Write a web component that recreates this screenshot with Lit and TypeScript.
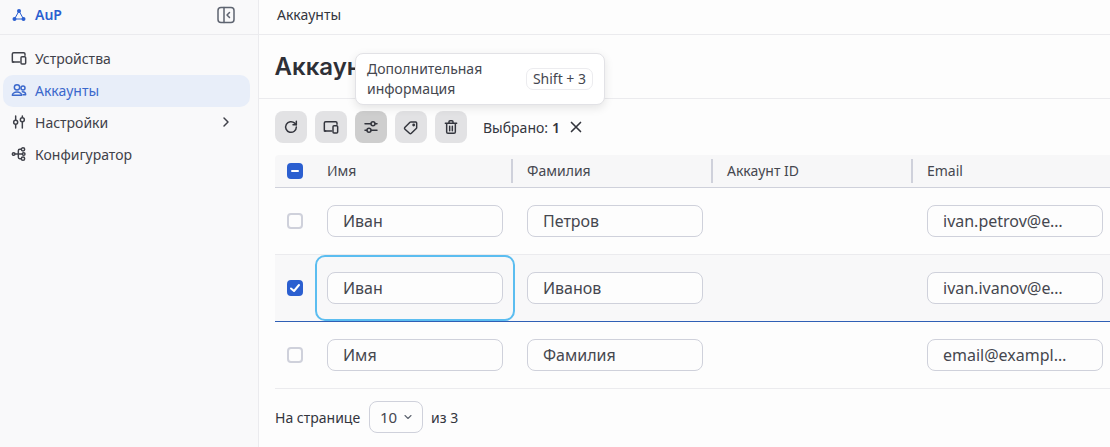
import { LitElement, html, css, svg } from 'lit';
import { customElement } from 'lit/decorators.js';

const icon = (body: unknown, size = 16) => html`<svg
  width=${size}
  height=${size}
  viewBox="0 0 24 24"
  fill="none"
  stroke="currentColor"
  stroke-width="2.2"
  stroke-linecap="round"
  stroke-linejoin="round"
>${body}</svg>`;

const devices = svg`<path d="M4 18a2 2 0 0 1-2-2V6a2 2 0 0 1 2-2h15a2 2 0 0 1 2 2v2"/><path d="M2 18h11"/><rect x="15" y="10" width="7" height="11" rx="1.5"/>`;
const users = svg`<circle cx="9" cy="8" r="4"/><circle cx="18" cy="9" r="3"/><path d="M2 20a7 5 0 0 1 14 0z"/><path d="M17 14.5c3 0 5 1.800 5 4.500h-4"/>`;
const tune = svg`<path d="M7 3v6M7 16v5M17 3v2M17 12v9"/><circle cx="7" cy="12.500" r="3"/><circle cx="17" cy="8.500" r="3"/>`;
const flow = svg`<circle cx="4" cy="12" r="2"/><circle cx="18" cy="5" r="2.500"/><circle cx="19" cy="12" r="2"/><circle cx="18" cy="19" r="2.500"/><path d="M6 12h11M11 12V7a2 2 0 0 1 2-2h2.500M11 12v5a2 2 0 0 0 2 2h2.500"/>`;
const refresh = svg`<path d="M20 12a8 8 0 1 1-2.500-5.800L20 8.500"/><path d="M20 3.500v5h-5"/>`;
const sliders = svg`<path d="M3 7h9M18 7h3M3 17h3M12 17h9"/><circle cx="15" cy="7" r="3"/><circle cx="9" cy="17" r="3"/>`;
const tag = svg`<path d="M3 12.500 10.500 5a2 2 0 0 1 1.400-.6H19a1.500 1.500 0 0 1 1.500 1.500V13a2 2 0 0 1-.6 1.400L12.500 21.500a2 2 0 0 1-2.800 0L3 15.300a2 2 0 0 1 0-2.800z"/><circle cx="16" cy="9" r="1"/>`;
const trash = svg`<path d="M3.500 6.500h17M9 6V4a1.500 1.500 0 0 1 1.500-1.500h3A1.500 1.500 0 0 1 15 4v2"/><path d="M5.500 7v12.500a2 2 0 0 0 2 2h9a2 2 0 0 0 2-2V7"/><path d="M10 11v6.500M14 11v6.500"/>`;

const rows = [
  { first: 'Иван', last: 'Петров', email: 'ivan.petrov@example.com' },
  { first: 'Иван', last: 'Иванов', email: 'ivan.ivanov@example.com', selected: true },
  { first: 'Имя', last: 'Фамилия', email: 'email@example.com' },
];

@customElement('app-root')
export class AppRoot extends LitElement {
  static styles = css`
    :host {
      display: flex;
      width: 1110px;
      height: 447px;
      overflow: hidden;
      background: #fdfdfd;
      color: #33353d;
      font-family: 'Noto Sans', sans-serif;
      font-size: 14px;
    }
    .sidebar {
      flex: none;
      width: 259px;
      box-sizing: border-box;
      background: #f9f9fa;
      border-right: 1px solid #ebebee;
    }
    .brand {
      display: flex;
      align-items: center;
      height: 35px;
      box-sizing: border-box;
      padding: 0 23px 5px 12px;
      border-bottom: 1px solid #ebebee;
      color: #2b5fd0;
      font-weight: 600;
      gap: 9px;
    }
    .brand .collapse {
      margin-left: auto;
      color: #5e6470;
      display: flex;
    }
    .nav {
      padding: 8px 8px 0 3px;
      display: flex;
      flex-direction: column;
    }
    .item {
      display: flex;
      align-items: center;
      height: 32px;
      box-sizing: border-box;
      padding: 0 16px 2px 8px;
      border-radius: 10px;
      gap: 8px;
      color: #3f4149;
    }
    .item.active {
      background: #e8eef9;
      color: #3b68cc;
    }
    .item .more {
      margin-left: auto;
      display: flex;
    }
    .main {
      flex: 1;
      min-width: 0;
      position: relative;
    }
    .crumb {
      height: 35px;
      box-sizing: border-box;
      padding: 0 18px 5px;
      display: flex;
      align-items: center;
      border-bottom: 1px solid #ebebee;
      font-size: 14px;
    }
    .title {
      height: 64px;
      box-sizing: border-box;
      padding: 0 15.5px;
      display: flex;
      align-items: center;
      border-bottom: 1px solid #ebebee;
      font-family: Inter, sans-serif;
      font-size: 24px;
      font-weight: 600;
      color: #2e3037;
    }
    .tip {
      position: absolute;
      left: 96px;
      top: 53px;
      width: 250px;
      height: 52px;
      box-sizing: border-box;
      padding: 0 11px;
      display: flex;
      align-items: center;
      justify-content: space-between;
      background: #fff;
      border: 1px solid #e2e2e6;
      border-radius: 8px;
      box-shadow: 0 3px 10px rgba(0, 0, 0, 0.1);
      font-size: 14px;
      line-height: 20px;
      color: #45474f;
    }
    .tip .text {
      width: 140px;
    }
    .kbd {
      border: 1px solid #ececef;
      border-radius: 7px;
      padding: 0 6px;
      height: 20px;
    }
    .toolbar {
      display: flex;
      align-items: center;
      gap: 8px;
      padding: 12px 16px;
    }
    .tool {
      width: 32px;
      height: 32px;
      border-radius: 8px;
      background: #e2e2e4;
      display: flex;
      align-items: center;
      justify-content: center;
      color: #33353d;
    }
    .tool.on {
      background: #cecece;
    }
    .picked {
      margin-left: 8px;
      font-size: 14px;
      display: flex;
      align-items: center;
      gap: 4px;
    }
    .picked b {
      font-weight: 600;
    }
    .picked span {
      display: flex;
      margin-left: 3px;
    }
    .table {
      margin-left: 16px;
      width: 860px;
    }
    .row {
      display: grid;
      grid-template-columns: 40px 200px 200px 200px 200px;
      height: 67px;
      box-sizing: border-box;
      border-bottom: 1px solid #ebebee;
      align-items: center;
    }
    .row.head {
      height: 33px;
      padding-bottom: 2px;
      background: #f7f7f8;
      border-bottom: 1px solid #cfd1db;
      border-radius: 4px 4px 0 0;
      font-size: 14px;
      color: #45474f;
    }
    .row.selected {
      background: #f8f8f9;
      border-bottom: 1px solid #2f5fb5;
    }
    .head .col {
      height: 24px;
      display: flex;
      align-items: center;
      padding-left: 12px;
      box-sizing: border-box;
      position: relative;
    }
    .head .sep {
      position: absolute;
      right: 2px;
      top: 1px;
      width: 2px;
      height: 24px;
      background: #cfd1db;
    }
    .check-cell {
      display: flex;
      justify-content: center;
    }
    .head .check-cell {
      padding-top: 2px;
    }
    .check {
      width: 16px;
      height: 16px;
      box-sizing: border-box;
      border: 2px solid #cfd1db;
      border-radius: 4px;
      background: #fdfdfd;
      color: #fff;
      display: flex;
      align-items: center;
      justify-content: center;
    }
    .check.on {
      background: #2b5fd0;
      border-color: #2b5fd0;
    }
    .check.on i {
      width: 8px;
      height: 2px;
      background: #fff;
      border-radius: 1px;
    }
    .cell {
      height: 100%;
      display: flex;
      align-items: center;
      padding-left: 12px;
      box-sizing: border-box;
    }
    .cell.focus {
      outline: 2px solid #5bbdf0;
      outline-offset: -2px;
      border-radius: 10px;
      height: 66px;
    }
    .field {
      width: 176px;
      height: 32px;
      box-sizing: border-box;
      border: 1px solid #cfd1db;
      border-radius: 8px;
      background: #fdfdfd;
      padding: 0 32px 0 15px;
      display: flex;
      align-items: center;
      font-size: 16px;
      color: #45474f;
    }
    .field span {
      white-space: nowrap;
      overflow: hidden;
      text-overflow: ellipsis;
    }
    .pager {
      display: flex;
      align-items: center;
      gap: 8px;
      padding: 12px 16px;
      font-size: 14px;
    }
    .pager .label {
      margin-right: 1px;
    }
    .select {
      width: 54px;
      height: 32px;
      box-sizing: border-box;
      border: 1px solid #cfd1db;
      border-radius: 8px;
      display: flex;
      align-items: center;
      justify-content: center;
      gap: 5px;
      padding-left: 2px;
      font-size: 15px;
      color: #45474f;
    }
    .select span {
      display: flex;
      color: #5e6470;
    }
  `;

  private renderField(value: string) {
    return html`<div class="field"><span>${value}</span></div>`;
  }

  render() {
    return html`
      <aside class="sidebar">
        <div class="brand">
          <svg width="14" height="14" viewBox="0 0 14 14" fill="currentColor" stroke="currentColor">
            <path d="M7 3 2.500 11h9z" fill="none" stroke-width="1" />
            <circle cx="7" cy="3" r="2" stroke="none" />
            <circle cx="2.500" cy="11" r="2" stroke="none" />
            <circle cx="11.500" cy="11" r="2" stroke="none" />
          </svg>
          <span>AuP</span>
          <span class="collapse">
            <svg width="18" height="18" viewBox="0 0 18 18" fill="none" stroke="currentColor" stroke-width="1.500" stroke-linecap="round" stroke-linejoin="round">
              <rect x="1" y="1.500" width="16" height="15" rx="3" />
              <path d="M7 1.500v15M12.500 6.500 10 9l2.500 2.500" />
            </svg>
          </span>
        </div>
        <nav class="nav">
          <div class="item">${icon(devices)}<span>Устройства</span></div>
          <div class="item active">${icon(users)}<span>Аккаунты</span></div>
          <div class="item">
            ${icon(tune)}<span>Настройки</span>
            <span class="more">${icon(svg`<path d="m9 6 6 6-6 6"/>`)}</span>
          </div>
          <div class="item">${icon(flow)}<span>Конфигуратор</span></div>
        </nav>
      </aside>
      <main class="main">
        <div class="crumb">Аккаунты</div>
        <div class="title">Аккаунты</div>
        <div class="tip">
          <div class="text">Дополнительная информация</div>
          <div class="kbd">Shift + 3</div>
        </div>
        <div class="toolbar">
          <div class="tool">${icon(refresh)}</div>
          <div class="tool">${icon(devices)}</div>
          <div class="tool on">${icon(sliders)}</div>
          <div class="tool">${icon(tag)}</div>
          <div class="tool">${icon(trash)}</div>
          <div class="picked">
            Выбрано: <b>1</b>
            <span>${icon(svg`<path d="M6 6l12 12M18 6 6 18"/>`, 18)}</span>
          </div>
        </div>
        <div class="table">
          <div class="row head">
            <div class="check-cell"><div class="check on"><i></i></div></div>
            <div class="col">Имя<span class="sep"></span></div>
            <div class="col">Фамилия<span class="sep"></span></div>
            <div class="col">Аккаунт ID<span class="sep"></span></div>
            <div class="col">Email</div>
          </div>
          ${rows.map(
            (r) => html`
              <div class="row ${r.selected ? 'selected' : ''}">
                <div class="check-cell">
                  <div class="check ${r.selected ? 'on' : ''}">
                    ${r.selected
                      ? html`<svg width="12" height="12" viewBox="0 0 12 12" fill="none" stroke="currentColor" stroke-width="2" stroke-linecap="round" stroke-linejoin="round"><path d="M2 6.500 5 9l5-6" /></svg>`
                      : ''}
                  </div>
                </div>
                <div class="cell ${r.selected ? 'focus' : ''}">${this.renderField(r.first)}</div>
                <div class="cell">${this.renderField(r.last)}</div>
                <div class="cell"></div>
                <div class="cell">${this.renderField(r.email)}</div>
              </div>
            `
          )}
        </div>
        <div class="pager">
          <span class="label">На странице</span>
          <div class="select">10 <span>${icon(svg`<path d="m6 9 6 6 6-6"/>`, 12)}</span></div>
          <span>из 3</span>
        </div>
      </main>
    `;
  }
}
